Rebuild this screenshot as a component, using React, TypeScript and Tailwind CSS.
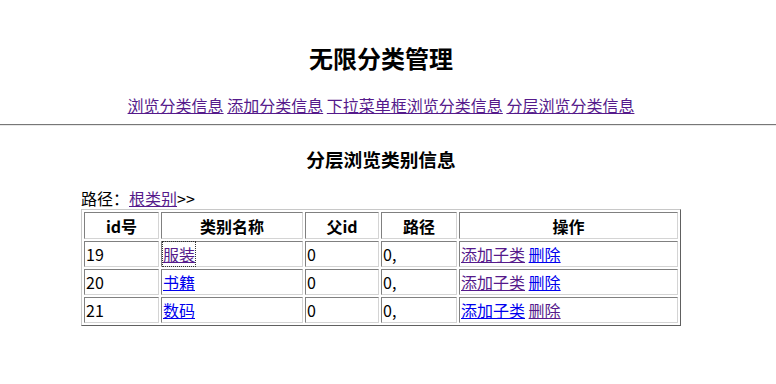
import React from "react";

const V = "text-[#551a8b] underline";
const B = "text-[#0000ee] underline";

const rows = [
  { id: "19", name: "服装", nameC: V, addC: V, delC: B, focus: true },
  { id: "20", name: "书籍", nameC: B, addC: V, delC: B, focus: false },
  { id: "21", name: "数码", nameC: B, addC: B, delC: V, focus: false },
];

const cell = "border border-t-[#808080] border-l-[#808080] border-b-[#d4d4d4] border-r-[#d4d4d4] px-[1px] py-0 h-[26px] text-left align-middle";
const th = "border border-t-[#808080] border-l-[#808080] border-b-[#d4d4d4] border-r-[#d4d4d4] px-[1px] py-0 h-[27px] text-center font-bold align-middle";

export default function App() {
  return (
    <div
      className="w-[776px] h-[384px] bg-white text-black text-[16px] leading-[22px]"
      style={{ fontFamily: '"Noto Sans CJK SC", "Noto Sans", sans-serif' }}
    >
      <div className="w-[762px]">
        <div className="pt-[42px] text-center text-[24px] leading-[32px] font-bold">无限分类管理</div>
        <div className="mt-[20px] text-center">
          <a className={V} href="#">浏览分类信息</a>{" "}
          <a className={V} href="#">添加分类信息</a>{" "}
          <a className={V} href="#">下拉菜单框浏览分类信息</a>{" "}
          <a className={V} href="#">分层浏览分类信息</a>
        </div>
      </div>
      <div className="mt-[8px] h-[2px] border-t border-t-[#777] border-b border-b-[#e8e8e8]" />
      <div className="w-[762px]">
        <div className="mt-[21px] text-center text-[18.7px] leading-[24px] font-bold">分层浏览类别信息</div>
        <div className="w-[600px] mx-auto mt-[16px]">
          <div className="leading-[22px]">
            路径：<a className={V} href="#">根类别</a>&gt;&gt;
          </div>
          <table className="w-[600px] table-fixed border-separate border-spacing-[2px] border border-t-[#c8c8c8] border-l-[#c8c8c8] border-b-[#606060] border-r-[#606060]">
            <thead>
              <tr>
                <th className={`${th} w-[75px]`}>id号</th>
                <th className={`${th} w-[142px]`}>类别名称</th>
                <th className={`${th} w-[74px]`}>父id</th>
                <th className={`${th} w-[76px]`}>路径</th>
                <th className={th}>操作</th>
              </tr>
            </thead>
            <tbody>
              {rows.map((r) => (
                <tr key={r.id}>
                  <td className={cell}>{r.id}</td>
                  <td className={cell}>
                    <a
                      className={`${r.nameC} ${r.focus ? "outline outline-1 outline-dotted outline-[#333]" : ""}`}
                      href="#"
                    >
                      {r.name}
                    </a>
                  </td>
                  <td className={cell}>0</td>
                  <td className={cell}>0,</td>
                  <td className={cell}>
                    <a className={r.addC} href="#">添加子类</a>{" "}
                    <a className={r.delC} href="#">删除</a>
                  </td>
                </tr>
              ))}
            </tbody>
          </table>
        </div>
      </div>
    </div>
  );
}
